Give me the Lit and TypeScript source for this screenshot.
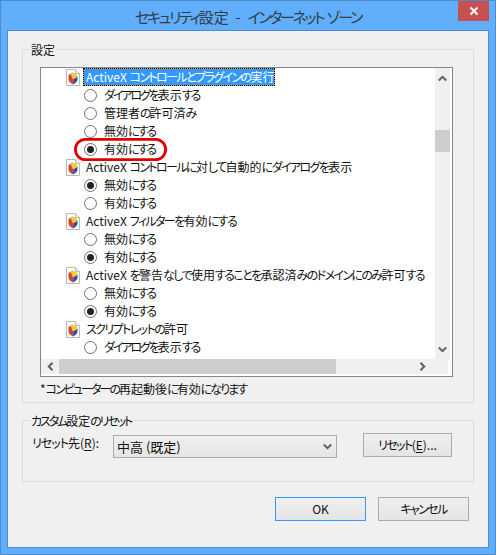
import { LitElement, html, css, svg } from "lit";
import { customElement } from "lit/decorators.js";

type Row = { kind: "head" | "radio"; text: string; on?: boolean; sel?: boolean };

const rows: Row[] = [
  { kind: "head", text: "ActiveX コントロールとプラグインの実行", sel: true },
  { kind: "radio", text: "ダイアログを表示する" },
  { kind: "radio", text: "管理者の許可済み" },
  { kind: "radio", text: "無効にする" },
  { kind: "radio", text: "有効にする", on: true },
  { kind: "head", text: "ActiveX コントロールに対して自動的にダイアログを表示" },
  { kind: "radio", text: "無効にする", on: true },
  { kind: "radio", text: "有効にする" },
  { kind: "head", text: "ActiveX フィルターを有効にする" },
  { kind: "radio", text: "無効にする" },
  { kind: "radio", text: "有効にする", on: true },
  { kind: "head", text: "ActiveX を警告なしで使用することを承認済みのドメインにのみ許可する" },
  { kind: "radio", text: "無効にする" },
  { kind: "radio", text: "有効にする", on: true },
  { kind: "head", text: "スクリプトレットの許可" },
  { kind: "radio", text: "ダイアログを表示する" },
];

/* Kana runs are tightened, as in the narrow UI face of the reference; kanji and Latin keep their width. */
const t = (s: string) =>
  (s.match(/[\u3040-\u30ff]+|[^\u3040-\u30ff]+/g) ?? []).map((run) =>
    /[\u3040-\u30ff]/.test(run) ? html`<span class="k">${run}</span>` : run
  );

const shield = html`<svg class="ico" viewBox="0 0 14 18" width="14" height="18">
  <path d="M.5 1.5h9l4 4v12H.5z" fill="#fff" stroke="#b8b8b8"/>
  <path d="M9.5 1.5v4h4" fill="#eee" stroke="#b8b8b8"/>
  <path d="M7 4.500 2.500 7v4.500c0 2.200 2.300 3.900 4.500 4.900l1-5z" fill="#d8432f"/>
  <path d="M11.500 8.500v3c0 2.200-2.300 3.900-4.500 4.900l.6-5.400z" fill="#2b4fb0"/>
  <path d="M7 4.500 4.500 5.900 7 11.500l4.500-3V7z" fill="#f6c83c"/>
</svg>`;

const radio = (on?: boolean) => html`<svg class="radio" viewBox="0 0 13 13" width="13" height="13">
  <circle cx="6.500" cy="6.500" r="6" fill="#fff" stroke="#707070"/>
  ${on ? svg`<circle cx="6.500" cy="6.500" r="3.500" fill="#222"/>` : null}
</svg>`;

const arrow = (d: string) => html`<svg class="arr" viewBox="0 0 9 9" width="9" height="9">
  <path d=${d} fill="none" stroke="#606060" stroke-width="2"/>
</svg>`;

@customElement("app-root")
export class AppRoot extends LitElement {
  static styles = css`
    :host { display: block; width: 496px; height: 555px; font-family: "Noto Sans CJK JP", "Liberation Sans", sans-serif; font-feature-settings: "palt"; }
    .k { letter-spacing: -1.6px; }
    .win { box-sizing: border-box; width: 496px; height: 555px; background: #60aefc; border: 1px solid #4a8ccc; position: relative; display: flex; flex-direction: column; padding: 0 6px 6px; color: #111; }
    .title { height: 29px; flex: none; display: flex; align-items: center; justify-content: center; font-size: 15px; color: #333d4a; padding-top: 2px; box-sizing: border-box; white-space: pre; }
    .title .k { letter-spacing: -2.3px; }
    .close { position: absolute; right: 6px; top: 0; width: 31px; height: 20px; background: #c75050; display: flex; align-items: center; justify-content: center; }
    .client { flex: 1; box-sizing: border-box; border: 1px solid #4a8ccc; background: #f0f0f0; padding: 18px 14px 0 14px; display: flex; flex-direction: column; font-size: 12px; line-height: 18px; }
    fieldset { margin: 0; padding: 0; border: 1px solid #dcdcdc; position: relative; min-width: 0; }
    .legend { position: absolute; left: 7px; top: -9px; background: #f0f0f0; padding: 0 1px; font-size: 12px; line-height: 18px; }
    .legend .k { letter-spacing: -2.1px; }
    .g1 { height: 354px; box-sizing: border-box; padding: 17px 20px 0 17px; }
    .list { box-sizing: border-box; height: 310px; border: 1px solid #828790; background: #fff; position: relative; display: grid; grid-template-columns: 394px 15px; grid-template-rows: 292px 15px; padding-right: 2px; }
    .rows { padding-left: 25px; overflow: hidden; }
    .row { height: 18px; display: flex; align-items: center; white-space: nowrap; }
    .ico { flex: none; margin-right: 3px; }
    .radio { flex: none; margin-left: 18px; margin-right: 7px; }
    .txt { line-height: 18px; padding: 0 1px 0 3px; box-sizing: border-box; }
    .rtxt { line-height: 18px; }
    .rtxt .k { letter-spacing: -2.1px; }
    .sel { background: #3399ff; color: #fff; outline: 1px dotted #000; outline-offset: -1px; box-shadow: inset 0 0 0 1px #e8a030; }
    .vbar { background: #f0f0f0; display: flex; flex-direction: column; align-items: center; justify-content: space-between; padding: 6px 0; box-sizing: border-box; position: relative; height: 292px; }
    .vthumb { position: absolute; left: 0; top: 62px; width: 15px; height: 22px; background: #cdcdcd; }
    .hbar { grid-column: 1 / 3; background: #f0f0f0; display: flex; align-items: center; height: 15px; margin-right: 2px; align-self: end; margin-bottom: 1px; }
    .hbtn { width: 18px; flex: none; display: flex; justify-content: center; }
    .hthumb { width: 277px; height: 15px; background: #cdcdcd; flex: none; }
    .hrest { flex: 1; display: flex; justify-content: flex-end; padding-right: 21px; }
    .note { font-size: 12px; margin-top: 3px; line-height: 18px; }
    .note .k { letter-spacing: -1.95px; }
    .g2 { height: 62px; margin-top: 17px; box-sizing: border-box; padding: 13px 20px 0 9px; display: flex; align-items: flex-start; }
    .lab { width: 81px; flex: none; }
    .lab .k { letter-spacing: -1px; }
    u { text-underline-offset: 2px; }
    .combo { box-sizing: border-box; width: 224px; height: 23px; margin-top: 1px; border: 1px solid #acacac; background: linear-gradient(#f0f0f0, #e5e5e5); display: flex; align-items: center; justify-content: space-between; padding: 0 4px 0 3px; font-size: 13px; }
    .btn { box-sizing: border-box; height: 24px; border: 1px solid #acacac; background: linear-gradient(#f0f0f0, #e5e5e5); display: flex; align-items: center; justify-content: center; font-size: 12px; }
    .reset { width: 89px; margin-left: 26px; margin-top: -1px; }
    .foot { display: flex; justify-content: flex-end; gap: 12px; padding: 15px 5px 0 0; }
    .foot .btn { width: 91px; }
    .ok { border-color: #3399ff; }
    .ring { position: absolute; left: 73px; top: 137px; pointer-events: none; }
  `;

  render() {
    return html`<div class="win">
      <div class="title"><span>${t("セキュリティ設定")}  -  ${t("インターネット")} ${t("ゾーン")}</span></div>
      <div class="close"><svg viewBox="0 0 10 10" width="10" height="10"><path d="M1.500 1.500l7 7M8.500 1.500l-7 7" stroke="#fff" stroke-width="2"/></svg></div>
      <div class="client">
        <fieldset class="g1">
          <div class="legend">設定</div>
          <div class="list">
            <div class="rows">
              ${rows.map((r) => r.kind === "head"
                ? html`<div class="row">${shield}<span class="txt ${r.sel ? "sel" : ""}">${t(r.text)}</span></div>`
                : html`<div class="row">${radio(r.on)}<span class="rtxt">${t(r.text)}</span></div>`)}
            </div>
            <div class="vbar">
              ${arrow("M.8 6.500 4.500 2.800 8.200 6.500")}
              <div class="vthumb"></div>
              ${arrow("M.8 2.500 4.500 6.200 8.200 2.500")}
            </div>
            <div class="hbar">
              <div class="hbtn">${arrow("M6.500.8 2.800 4.500 6.500 8.200")}</div>
              <div class="hthumb"></div>
              <div class="hrest">${arrow("M2.500.8 6.200 4.500 2.500 8.200")}</div>
            </div>
          </div>
          <div class="note">${t("*コンピューターの再起動後に有効になります")}</div>
        </fieldset>
        <fieldset class="g2">
          <div class="legend">${t("カスタム設定のリセット")}</div>
          <div class="lab">${t("リセット先")}(<u>R</u>):</div>
          <div class="combo"><span>中高 (既定)</span>${arrow("M.8 2.500 4.500 6.200 8.200 2.500")}</div>
          <div class="btn reset"><span>${t("リセット")}(<u>E</u>)...</span></div>
        </fieldset>
        <div class="foot">
          <div class="btn ok">OK</div>
          <div class="btn"><span>${t("キャンセル")}</span></div>
        </div>
      </div>
      <svg class="ring" width="93" height="23" viewBox="0 0 93 23"><rect x="1.400" y="1.400" width="90.200" height="20.200" rx="10" fill="none" stroke="#e00000" stroke-width="2.800"/></svg>
    </div>`;
  }
}
